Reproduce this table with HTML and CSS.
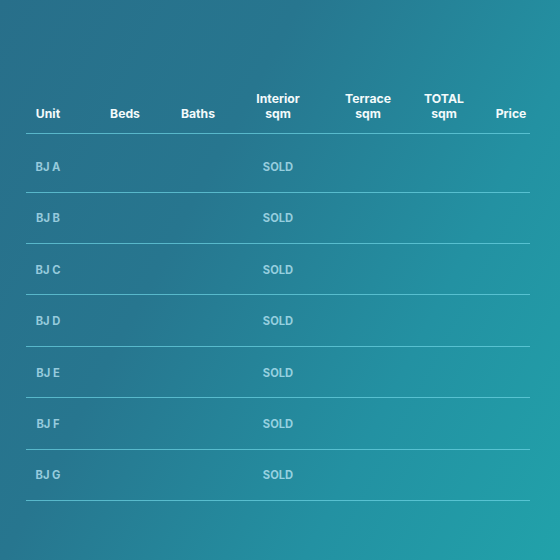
FILE: index.html
```html
<!DOCTYPE html>
<html lang="en">
<head>
<meta charset="utf-8">
<title>Units</title>
<link rel="stylesheet" href="styles.css">
</head>
<body>
<div class="page">
  <div class="table">
    <div class="row head">
      <div class="cell">Unit</div>
      <div class="cell">Beds</div>
      <div class="cell">Baths</div>
      <div class="cell">Interior<br>sqm</div>
      <div class="cell">Terrace<br>sqm</div>
      <div class="cell">TOTAL<br>sqm</div>
      <div class="cell">Price</div>
    </div>
    <div class="row body first">
      <div class="cell">BJ A</div><div class="cell"></div><div class="cell"></div><div class="cell">SOLD</div><div class="cell"></div><div class="cell"></div><div class="cell"></div>
    </div>
    <div class="row body">
      <div class="cell">BJ B</div><div class="cell"></div><div class="cell"></div><div class="cell">SOLD</div><div class="cell"></div><div class="cell"></div><div class="cell"></div>
    </div>
    <div class="row body">
      <div class="cell">BJ C</div><div class="cell"></div><div class="cell"></div><div class="cell">SOLD</div><div class="cell"></div><div class="cell"></div><div class="cell"></div>
    </div>
    <div class="row body">
      <div class="cell">BJ D</div><div class="cell"></div><div class="cell"></div><div class="cell">SOLD</div><div class="cell"></div><div class="cell"></div><div class="cell"></div>
    </div>
    <div class="row body">
      <div class="cell">BJ E</div><div class="cell"></div><div class="cell"></div><div class="cell">SOLD</div><div class="cell"></div><div class="cell"></div><div class="cell"></div>
    </div>
    <div class="row body">
      <div class="cell">BJ F</div><div class="cell"></div><div class="cell"></div><div class="cell">SOLD</div><div class="cell"></div><div class="cell"></div><div class="cell"></div>
    </div>
    <div class="row body">
      <div class="cell">BJ G</div><div class="cell"></div><div class="cell"></div><div class="cell">SOLD</div><div class="cell"></div><div class="cell"></div><div class="cell"></div>
    </div>
  </div>
</div>
</body>
</html>
```

FILE: styles.css
```css
html, body {
  margin: 0;
  padding: 0;
}
body {
  width: 560px;
  height: 560px;
  overflow: hidden;
  font-family: "Inter", "DejaVu Sans", sans-serif;
  background: linear-gradient(118deg, #286f8a 0%, #27768f 35%, #2391a2 70%, #21a2aa 100%);
}
.page {
  padding: 80px 30px 0 26px;
}
.table {
  width: 504px;
}
.row {
  display: grid;
  grid-template-columns: 44px 110px 36px 124px 56px 96px 38px;
  box-sizing: border-box;
  border-bottom: 1px solid rgba(110, 212, 228, 0.7);
}
.cell {
  text-align: center;
  white-space: nowrap;
  display: flex;
  justify-content: center;
}
.head {
  height: 54px;
  align-items: end;
  padding-bottom: 12px;
  color: #f3fafb;
  font-weight: 700;
  font-size: 12.2px;
  line-height: 15px;
}
.body {
  height: 51.35px;
  align-items: center;
  color: rgba(195, 238, 252, 0.72);
  font-weight: 700;
  font-size: 11.2px;
  padding-top: 1px;
}
.body.first {
  height: 58.8px;
  padding-top: 9px;
}
```
